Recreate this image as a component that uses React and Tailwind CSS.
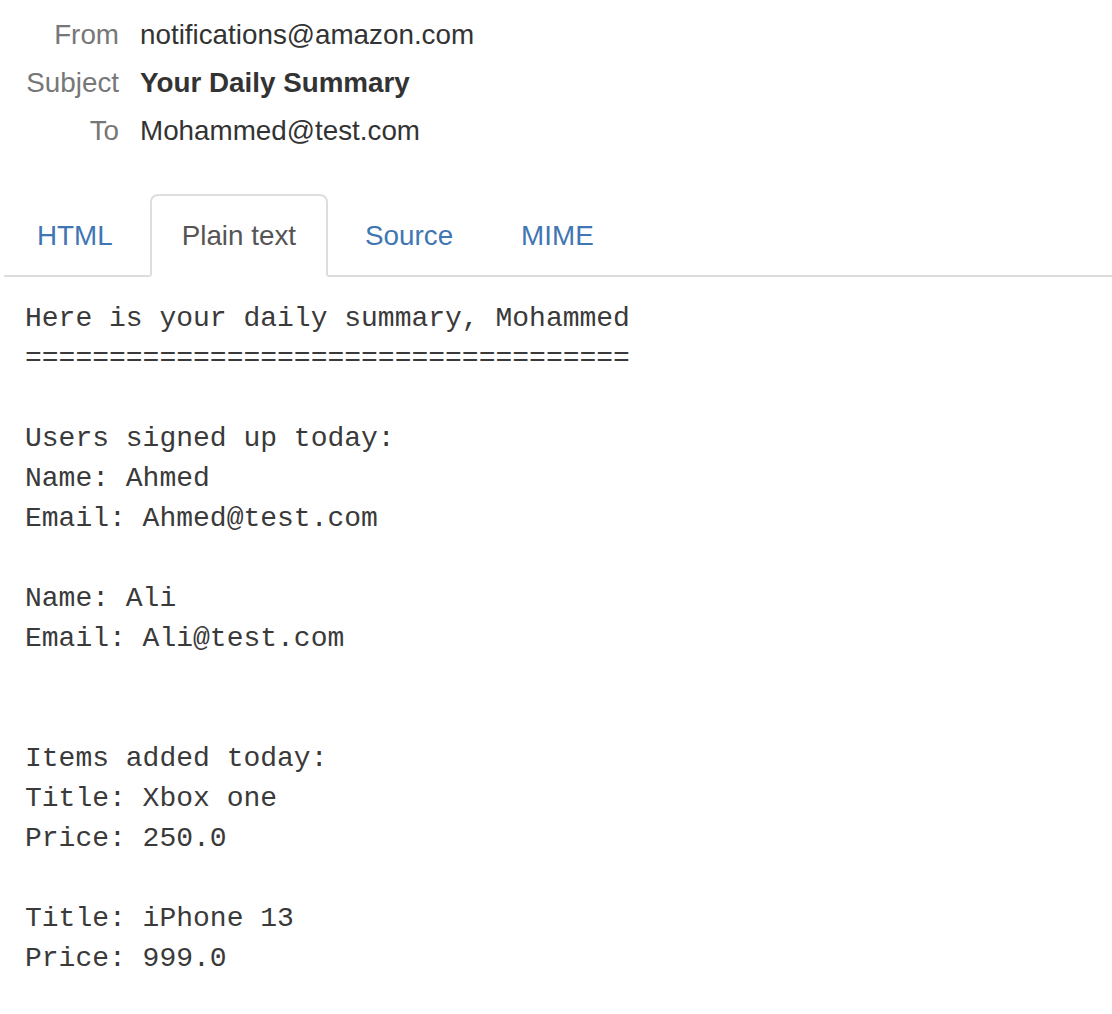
import React from "react";

const lines = [
  "Here is your daily summary, Mohammed",
  "====================================",
  "",
  "Users signed up today:",
  "Name: Ahmed",
  "Email: Ahmed@test.com",
  "",
  "Name: Ali",
  "Email: Ali@test.com",
  "",
  "",
  "Items added today:",
  "Title: Xbox one",
  "Price: 250.0",
  "",
  "Title: iPhone 13",
  "Price: 999.0",
];

function Row({ label, children, bold }) {
  return (
    <div className="flex h-[48px] items-center">
      <div className="w-[119px] text-right text-[#777777]">{label}</div>
      <div className={"ml-[21px] text-[#333333] " + (bold ? "font-bold" : "")}>{children}</div>
    </div>
  );
}

export default function App() {
  return (
    <div
      className="min-h-[1014px] w-[1112px] bg-white"
      style={{ fontFamily: '"Liberation Sans", Arial, Helvetica, sans-serif' }}
    >
      <div className="pt-[11px] text-[27.8px] leading-[48px]">
        <Row label="From">notifications@amazon.com</Row>
        <Row label="Subject" bold>Your Daily Summary</Row>
        <Row label="To">Mohammed@test.com</Row>
      </div>
      <div className="mt-[39px] ml-[4px] flex border-b-2 border-[#dddddd] text-[27.8px]">
        <div className="mr-[4px] -mb-[2px] flex h-[83px] items-center rounded-t-[8px] border-2 border-transparent px-[31px] text-[#3f76b3]">
          HTML
        </div>
        <div className="mr-[4px] -mb-[2px] flex h-[83px] items-center rounded-t-[8px] border-2 border-[#dddddd] border-b-white bg-white px-[30px] text-[#555555]">
          Plain text
        </div>
        <div className="mr-[2px] -mb-[2px] flex h-[83px] items-center rounded-t-[8px] border-2 border-transparent px-[31px] text-[#3f76b3]">
          Source
        </div>
        <div className="mr-[4px] -mb-[2px] flex h-[83px] items-center rounded-t-[8px] border-2 border-transparent px-[31px] text-[#3f76b3]">
          MIME
        </div>
      </div>
      <pre
        className="m-0 pl-[25px] pt-[22px] text-[28px] leading-[40px] text-[#3a3a3a]"
        style={{ fontFamily: '"Liberation Mono", "Courier New", monospace' }}
      >
        {lines.join("\n")}
      </pre>
    </div>
  );
}
